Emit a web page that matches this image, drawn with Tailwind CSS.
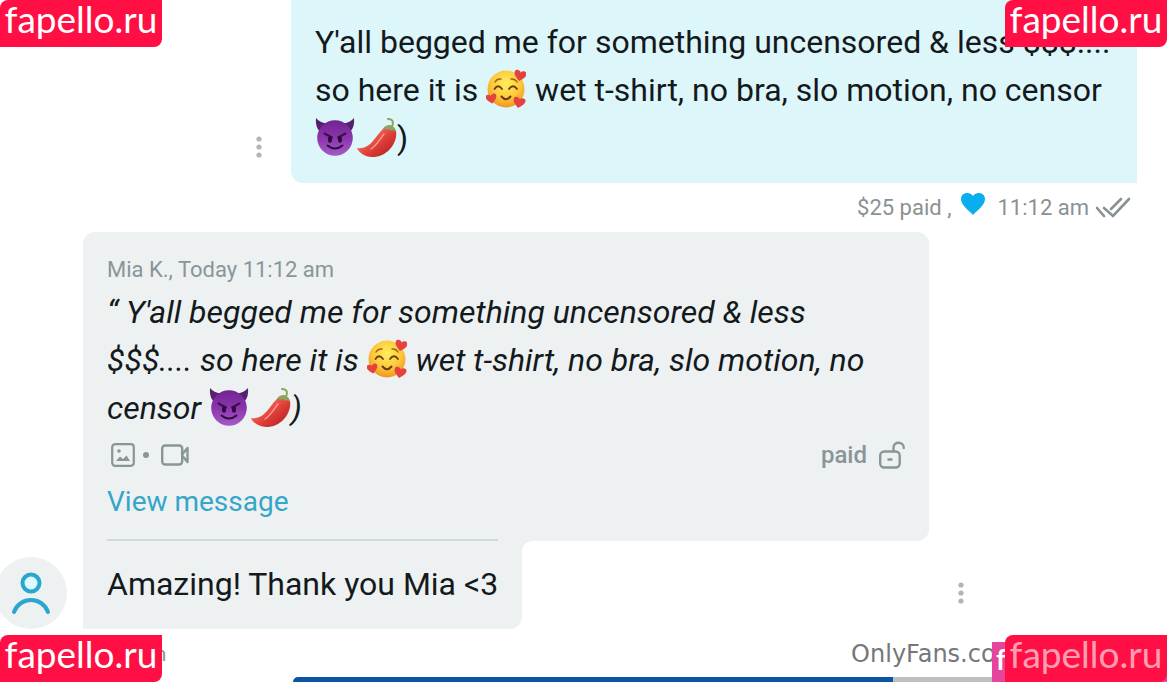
<!DOCTYPE html>
<html lang="en">
<head>
  <meta charset="UTF-8">
  <meta name="viewport" content="width=device-width, initial-scale=1.0">
  <title>Messages</title>
  <script src="https://cdn.jsdelivr.net/npm/@tailwindcss/browser@4"></script>
</head>
<body class="relative min-h-screen overflow-hidden bg-white font-['Roboto',sans-serif] text-[#14191c]">

  <!-- Shared emoji drawings -->
  <svg class="absolute size-0" aria-hidden="true">
    <defs>
      <radialGradient id="faceFill" cx="50%" cy="35%" r="65%">
        <stop offset="0" stop-color="#ffee5e"/>
        <stop offset="0.6" stop-color="#fdc93a"/>
        <stop offset="1" stop-color="#ef9420"/>
      </radialGradient>
      <linearGradient id="devilFill" x1="0" y1="0" x2="0" y2="1">
        <stop offset="0" stop-color="#6f2390"/>
        <stop offset="0.5" stop-color="#8c35ae"/>
        <stop offset="1" stop-color="#a55ac8"/>
      </linearGradient>
      <linearGradient id="chiliFill" x1="0" y1="0" x2="1" y2="1">
        <stop offset="0.3" stop-color="#ef6a5b"/>
        <stop offset="0.6" stop-color="#dc3a35"/>
        <stop offset="1" stop-color="#a81d20"/>
      </linearGradient>
      <path id="smallHeart" d="M0 5C-4 2-6 0-6-3C-6-6-1.500-6.500 0-3.500C1.500-6.500 6-6 6-3C6 0 4 2 0 5Z"/>
    </defs>
    <symbol id="hearts" viewBox="0 0 40 40">
      <circle cx="20" cy="20" r="18.500" fill="url(#faceFill)"/>
      <path d="M9 13Q11 9.500 15 10M25 10Q29 9.500 31 13" stroke="#a4631a" stroke-width="1.500" fill="none" stroke-linecap="round"/>
      <path d="M8.500 20Q12 14.500 16 20M23 20Q27 14.500 31 20" stroke="#6e3c12" stroke-width="1.800" fill="none" stroke-linecap="round"/>
      <path d="M15.500 27.500Q20 33 24.500 27.500" stroke="#6e3c12" stroke-width="2" fill="none" stroke-linecap="round"/>
      <g fill="#e5413e">
        <use href="#smallHeart" transform="translate(34 7) rotate(12)"/>
        <use href="#smallHeart" transform="translate(5.500 30) rotate(-12) scale(.9)"/>
        <use href="#smallHeart" transform="translate(33 34) rotate(12)"/>
      </g>
    </symbol>
    <symbol id="devil" viewBox="0 0 40 40">
      <path d="M1 1Q6 7 13 6L5 15Q0 10 1 1ZM39 1Q34 7 27 6L35 15Q40 10 39 1Z" fill="#56206f"/>
      <circle cx="20" cy="21" r="17.800" fill="url(#devilFill)"/>
      <path d="M9.500 16.500L17 20.500M30.500 16.500L23 20.500" stroke="#3c104d" stroke-width="2" stroke-linecap="round"/>
      <ellipse cx="15" cy="22.500" rx="2" ry="3.200" fill="#2d0b3b"/>
      <ellipse cx="25" cy="22.500" rx="2" ry="3.200" fill="#2d0b3b"/>
      <path d="M12.500 28.500Q20 34.500 27.500 28.500" stroke="#2d0b3b" stroke-width="2" fill="none" stroke-linecap="round"/>
    </symbol>
    <symbol id="chili" viewBox="0 0 40 40">
      <path d="M34 11C37 7 37 2 31 2" stroke="#8da35f" stroke-width="2" fill="none" stroke-linecap="round"/>
      <path d="M25 13C29 7 37 8 39 14C41 25 31 40 15 40C8 40 1 35 0 31C13 33 18 20 25 13Z" fill="url(#chiliFill)"/>
      <path d="M26 12Q28 8 33 8Q38 9 39 15Q36 12 34 14Q32 11 30 13Q28 11 26 12Z" fill="#8da35f"/>
      <path d="M27 17C23 22 20 28 14 32" stroke="#ff9c8d" stroke-width="1.400" fill="none" stroke-linecap="round"/>
    </symbol>
    <symbol id="kebab" viewBox="0 0 6 24">
      <circle cx="3" cy="4" r="2.600"/><circle cx="3" cy="12" r="2.600"/><circle cx="3" cy="20" r="2.600"/>
    </symbol>
  </svg>

  <main>
    <!-- Sent message -->
    <section class="pr-[30px]">
      <div class="flex items-end justify-end">
        <button type="button" aria-label="Message options" class="flex h-[72px] w-16 items-center justify-center text-[#b0b5b7]">
          <svg class="h-6 w-1.5" fill="currentColor"><use href="#kebab"/></svg>
        </button>
        <div class="max-w-[846px] flex-1 rounded-bl-xl bg-[#ddf6fa] px-6 pt-[18px] pb-[21px]">
          <p class="text-[32px] leading-[48px]">Y'all begged me for something uncensored &amp; less $$$.... so here it is <svg class="mr-px inline size-10 align-[-8px]" role="img" aria-label="smiling face with hearts"><use href="#hearts"/></svg> wet t-shirt, no bra, slo motion, no censor <span class="whitespace-nowrap"><svg class="inline size-10 align-[-8px]" role="img" aria-label="smiling devil"><use href="#devil"/></svg><svg class="ml-0.5 inline size-10 align-[-8px]" role="img" aria-label="chili pepper"><use href="#chili"/></svg>)</span></p>
        </div>
      </div>
      <div class="flex h-[49px] items-center justify-end pr-1.5 text-[22px] text-[#8a9194]">
        <span>$25 paid ,</span>
        <svg class="mr-3 mb-2 ml-2.5 h-6 w-6" viewBox="0 0 24 24" fill="#08aeed" aria-hidden="true"><path d="M12 23C10 20 0 14 0 7C0 0 9-1 12 4C15-1 24 0 24 7C24 14 14 20 12 23Z"/></svg>
        <span>11:12 am</span>
        <svg class="ml-1.5 h-6 w-9" viewBox="0 0 36 24" fill="none" stroke="#8a9194" stroke-width="2.600" stroke-linecap="round" aria-hidden="true"><path d="M2 12L9 20M9 12L18 20L34 3M16 13L26 3"/></svg>
      </div>
    </section>

    <!-- Received message -->
    <section class="flex items-end">
      <div class="-ml-[5px] flex size-[72px] shrink-0 items-center justify-center rounded-full bg-[#eef1f1]">
        <svg class="size-11" viewBox="0 0 44 44" fill="none" stroke="#2ba6cf" stroke-width="4" stroke-linecap="round" aria-hidden="true"><circle cx="22" cy="12" r="8.500" fill="#dcfaff"/><path d="M5 41C11 25 33 25 39 41"/></svg>
      </div>
      <div class="ml-4 max-w-[846px] flex-1">
        <div class="rounded-t-xl rounded-br-xl bg-[#edf1f2] px-6 pt-6">
          <p class="text-[22px] leading-7 text-[#8a9598]">Mia K., Today 11:12 am</p>
          <blockquote class="mt-1 pr-6 text-[32px] leading-[48px] italic">“ Y'all begged me for something uncensored &amp; less $$$.... so here it is <svg class="mr-px inline size-10 align-[-8px]" role="img" aria-label="smiling face with hearts"><use href="#hearts"/></svg> wet t-shirt, no bra, slo motion, no censor <span class="whitespace-nowrap"><svg class="inline size-10 align-[-8px]" role="img" aria-label="smiling devil"><use href="#devil"/></svg><svg class="ml-0.5 inline size-10 align-[-8px]" role="img" aria-label="chili pepper"><use href="#chili"/></svg>)</span></blockquote>
          <div class="flex h-[46px] items-center justify-between text-[#8a9598]">
            <div class="flex items-center pl-1">
              <svg class="size-6" viewBox="0 0 24 24" fill="none" stroke="currentColor" stroke-width="2.200" aria-hidden="true"><rect x="1.200" y="1.200" width="21.600" height="21.600" rx="3"/><circle cx="8" cy="8" r="1.800" fill="currentColor" stroke="none"/><path d="M5 18L9 13.500L12 16L15.500 12.500L19 18Z" fill="currentColor" stroke="none"/></svg>
              <span class="mx-2 size-1.5 rounded-full bg-current"></span>
              <svg class="ml-1 h-6 w-7" viewBox="0 0 28 24" fill="none" stroke="currentColor" stroke-width="2.400" stroke-linejoin="round" aria-hidden="true"><rect x="1.200" y="2.500" width="20" height="19" rx="3"/><path d="M21.500 11L26.500 5V19L21.500 13"/></svg>
            </div>
            <div class="flex items-center gap-3 text-2xl font-medium">
              <span>paid</span>
              <svg class="h-7 w-6.5" viewBox="0 0 26 28" fill="none" stroke="currentColor" stroke-width="2.400" stroke-linecap="round" aria-hidden="true"><rect x="1.200" y="10.500" width="19.500" height="16" rx="4"/><path d="M14.500 10V6.500C14.500 0 24.800 0 24.800 7M9.500 18.500H12.500"/></svg>
            </div>
          </div>
          <a href="#" class="block h-[63px] text-[28px] leading-[48px] text-[#35a6c9]">View message</a>
        </div>
        <div class="flex items-start">
          <div class="-mt-0.5 rounded-br-xl bg-[#edf1f2] px-6">
            <p class="border-t-2 border-[#d3d8d9] pt-[19px] pb-[21px] text-[32px] leading-[48px]">Amazing! Thank you Mia &lt;3</p>
          </div>
          <svg class="size-3 text-[#edf1f2]" viewBox="0 0 12 12" fill="currentColor" aria-hidden="true"><path d="M0 0H12Q0 0 0 12Z"/></svg>
        </div>
      </div>
      <button type="button" aria-label="Message options" class="flex h-[72px] w-16 shrink-0 items-center justify-center text-[#b0b5b7]">
        <svg class="h-6 w-1.5" fill="currentColor"><use href="#kebab"/></svg>
      </button>
    </section>

    <div class="flex h-12 items-center justify-between pt-0.5 pr-[148px] pl-[83px]">
      <time class="text-xl text-[#8a9194]">11:12 am</time>
      <span class="font-['DejaVu_Sans',sans-serif] text-2xl text-[#777]">OnlyFans.com</span>
    </div>

    <!-- Top edge of the next message -->
    <div class="ml-[293px] flex h-[5px] rounded-tl-xl overflow-hidden">
      <div class="w-[600px] bg-[#0b55a5]"></div>
      <div class="flex-1 bg-[#bfbfc1]"></div>
    </div>
  </main>

  <!-- Watermarks -->
  <div class="absolute top-0 left-0 h-[47px] w-[162px] rounded-tl-lg rounded-br-lg bg-[#ff0f43] text-center font-['Lato',sans-serif] text-[37px] leading-[38px] text-white">fapello.ru</div>
  <div class="absolute top-0 right-0 h-[47px] w-[162px] rounded-tl-lg rounded-br-lg bg-[#ff0f43] text-center font-['Lato',sans-serif] text-[37px] leading-[38px] text-white">fapello.ru</div>
  <div class="absolute bottom-0 left-0 h-[47px] w-[162px] rounded-tl-lg rounded-br-lg bg-[#ff0f43] text-center font-['Lato',sans-serif] text-[37px] leading-[38px] text-white">fapello.ru</div>
  <div class="absolute right-0 bottom-0 h-10 w-[175px] bg-[#e5459d] pl-1 font-['Lato',sans-serif] text-[28px] leading-[34px] font-bold text-white">f</div>
  <div class="absolute right-0 bottom-0 h-[47px] w-[162px] rounded-tl-lg rounded-br-lg bg-[#ff0f43] text-center font-['Lato',sans-serif] text-[37px] leading-[38px] text-white/60">fapello.ru</div>
</body>
</html>
